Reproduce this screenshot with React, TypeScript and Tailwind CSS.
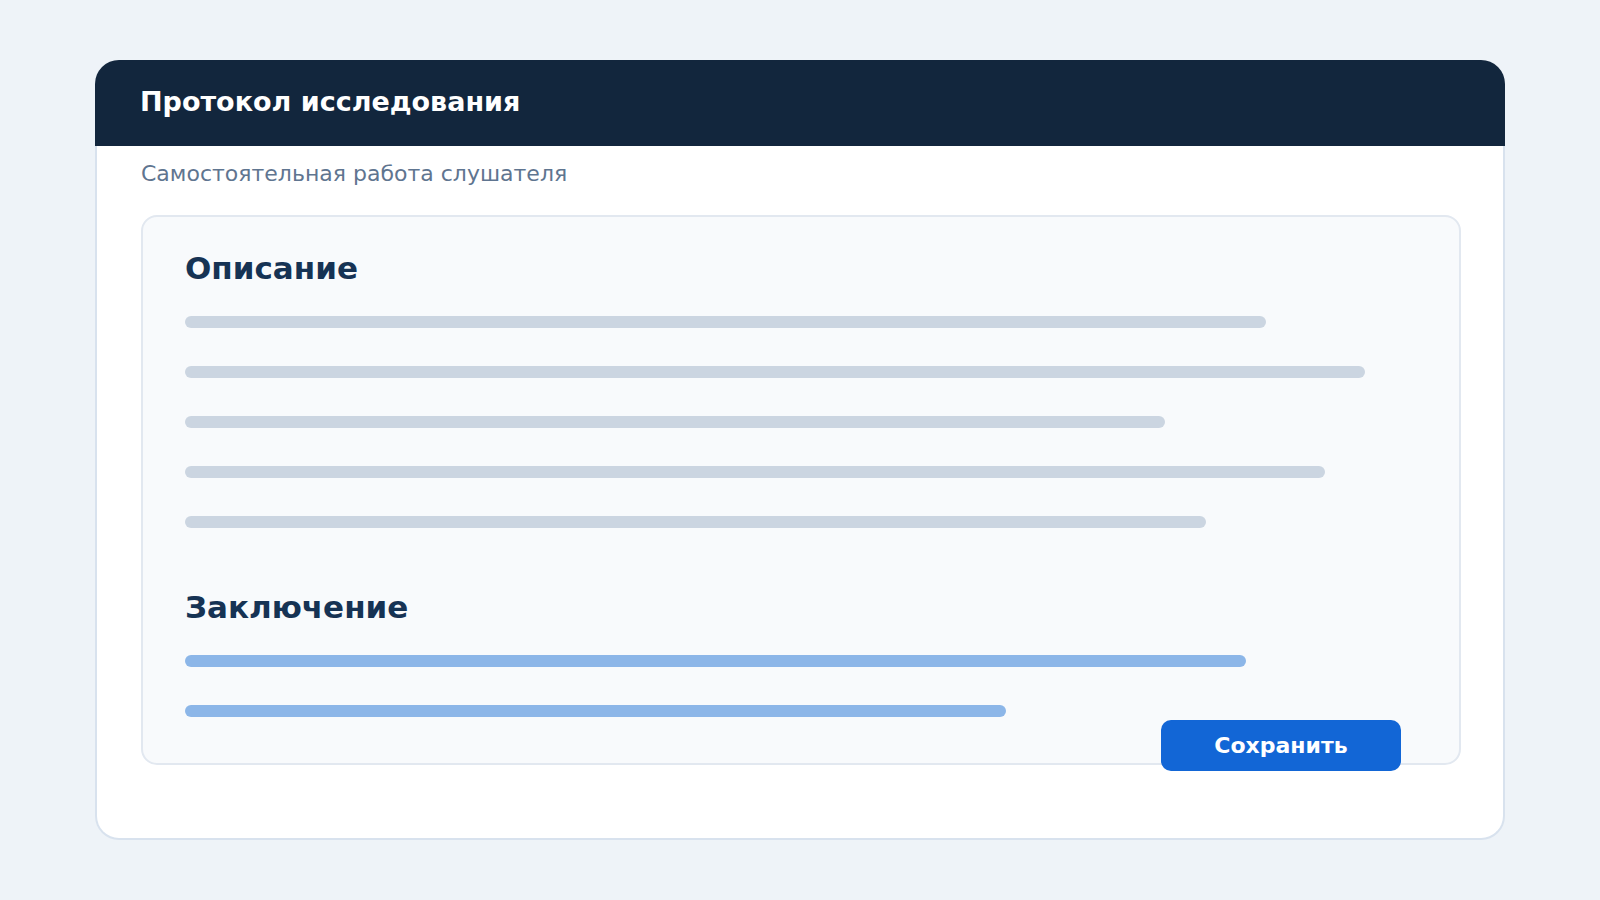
const grayLines = [1081, 1180, 980, 1140, 1021];
const blueLines = [1061, 821];

function Bar({ width, color }: { width: number; color: string }) {
  return <div className={`h-3 rounded-full ${color}`} style={{ width }} />;
}

export default function App() {
  return (
    <div className="min-h-screen bg-[#eef3f8] px-[95px] py-[60px] font-['DejaVu_Sans',sans-serif]">
      <div className="flex h-[780px] flex-col">
        {/* Header */}
        <div className="flex h-[86px] shrink-0 items-center rounded-t-[24px] bg-[#12263d] px-[45px] pb-[3px]">
          <h1 className="text-[27px] font-bold leading-none text-white">Протокол исследования</h1>
        </div>

        {/* Body */}
        <div className="flex-1 rounded-b-[24px] border-2 border-t-0 border-[#d8e2ee] bg-white pl-[44px] pr-[42px] pt-[12px]">
          <p className="text-[22px] leading-[32px] text-[#5f7590]">Самостоятельная работа слушателя</p>

          <div className="relative mt-[25px] h-[550px] rounded-2xl border-2 border-[#e2e8f0] bg-[#f8fafc] px-[42px] pt-[31px]">
            <h2 className="text-[31px] font-bold leading-[40px] text-[#163354]">Описание</h2>
            <div className="mt-[28px] flex flex-col gap-[38px]">
              {grayLines.map((w, i) => (
                <Bar key={i} width={w} color="bg-[#cbd5e1]" />
              ))}
            </div>

            <h2 className="mt-[59px] text-[31px] font-bold leading-[40px] text-[#163354]">Заключение</h2>
            <div className="mt-[28px] flex flex-col gap-[38px]">
              {blueLines.map((w, i) => (
                <Bar key={i} width={w} color="bg-[#8cb6e8]" />
              ))}
            </div>

            <button className="absolute -bottom-[8px] right-[58px] h-[51px] w-[240px] rounded-[10px] bg-[#1266d6] text-[22px] font-bold text-white">
              Сохранить
            </button>
          </div>
        </div>
      </div>
    </div>
  );
}
